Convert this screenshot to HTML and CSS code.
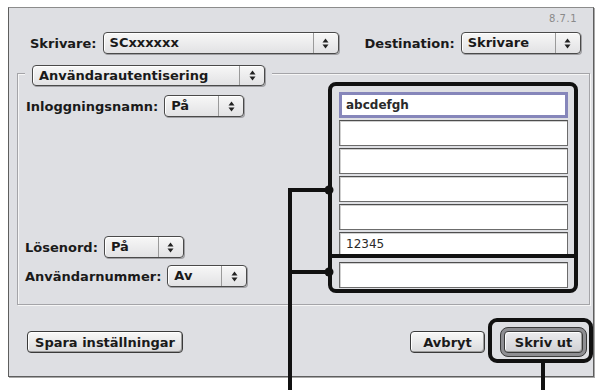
FILE: index.html
```html
<!DOCTYPE html>
<html lang="sv">
<head>
<meta charset="utf-8">
<title>Skriv ut</title>
<link rel="stylesheet" href="styles.css">
</head>
<body>
<div class="window">
  <div class="version">8.7.1</div>
  <div class="top-row">
    <span class="label">Skrivare:</span>
    <div class="popup w-printer"><span class="val">SCxxxxxx</span><span class="arrows"><svg width="7" height="11" viewBox="0 0 7 11"><path d="M0.5 4.5 L3.5 0.5 L6.5 4.5Z M0.5 6.5 L3.5 10.5 L6.5 6.5Z"/></svg></span></div>
    <span class="label dest">Destination:</span>
    <div class="popup w-dest"><span class="val">Skrivare</span><span class="arrows"><svg width="7" height="11" viewBox="0 0 7 11"><path d="M0.5 4.5 L3.5 0.5 L6.5 4.5Z M0.5 6.5 L3.5 10.5 L6.5 6.5Z"/></svg></span></div>
  </div>
  <div class="group">
    <div class="left-col">
      <div class="legend">
        <div class="popup w-legend"><span class="val">Användarautentisering</span><span class="arrows"><svg width="7" height="11" viewBox="0 0 7 11"><path d="M0.5 4.5 L3.5 0.5 L6.5 4.5Z M0.5 6.5 L3.5 10.5 L6.5 6.5Z"/></svg></span></div>
      </div>
      <div class="row login">
        <span class="label">Inloggningsnamn:</span>
        <div class="popup w-small"><span class="val">På</span><span class="arrows"><svg width="7" height="11" viewBox="0 0 7 11"><path d="M0.5 4.5 L3.5 0.5 L6.5 4.5Z M0.5 6.5 L3.5 10.5 L6.5 6.5Z"/></svg></span></div>
      </div>
      <div class="spacer"></div>
      <div class="row">
        <span class="label">Lösenord:</span>
        <div class="popup w-small"><span class="val">På</span><span class="arrows"><svg width="7" height="11" viewBox="0 0 7 11"><path d="M0.5 4.5 L3.5 0.5 L6.5 4.5Z M0.5 6.5 L3.5 10.5 L6.5 6.5Z"/></svg></span></div>
      </div>
      <div class="row last-row">
        <span class="label">Användarnummer:</span>
        <div class="popup w-small"><span class="val">Av</span><span class="arrows"><svg width="7" height="11" viewBox="0 0 7 11"><path d="M0.5 4.5 L3.5 0.5 L6.5 4.5Z M0.5 6.5 L3.5 10.5 L6.5 6.5Z"/></svg></span></div>
      </div>
    </div>
    <div class="callout">
      <div class="fields-clip">
        <div class="field focus">abcdefgh</div>
        <div class="field"></div>
        <div class="field"></div>
        <div class="field"></div>
        <div class="field"></div>
        <div class="field plain">12345</div>
      </div>
      <div class="divider"></div>
      <div class="field"></div>
    </div>
  </div>
  <div class="buttons">
    <button class="btn save">Spara inställningar</button>
    <div class="spacer"></div>
    <button class="btn cancel">Avbryt</button>
    <div class="default-ring"><button class="btn ok">Skriv ut</button></div>
  </div>
</div>
<svg class="annot" width="601" height="390" viewBox="0 0 601 390">
  <path d="M329 190 H290 V390 M290 272 H329" fill="none" stroke="#111" stroke-width="4"/>
  <circle cx="329" cy="190" r="4.5" fill="#111"/>
  <circle cx="329" cy="272" r="4.5" fill="#111"/>
  <rect x="490" y="320" width="101" height="41" rx="7" fill="none" stroke="#111" stroke-width="4"/>
  <path d="M543 361 V390" fill="none" stroke="#111" stroke-width="4"/>
</svg>
</body>
</html>
```

FILE: styles.css
```css
html, body {
  margin: 0;
  background: #fff;
}
body {
  padding: 7px 0 0 8px;
  width: 601px;
  height: 390px;
  box-sizing: border-box;
  overflow: hidden;
  font-family: "DejaVu Sans", "Liberation Sans", sans-serif;
  color: #1a1a1a;
}
.window {
  width: 586px;
  height: 370px;
  box-sizing: border-box;
  border: 1px solid #5e5e5e;
  border-top-color: #8c8c8c;
  background: #dedfe3;
  box-shadow: 1px 1px 0 #a8a8a8;
  display: flex;
  flex-direction: column;
}
.version {
  margin-top: 5px;
  height: 12px;
  line-height: 12px;
  font-size: 10px;
  color: #8a8a8a;
  text-align: right;
  padding-right: 16px;
  letter-spacing: 0.5px;
}
.label {
  font-weight: bold;
  font-size: 13px;
  white-space: nowrap;
}
.top-row {
  display: flex;
  align-items: center;
  gap: 6px;
  margin-top: 7px;
  padding-left: 21px;
}
.top-row .dest {
  margin-left: 20px;
}
.popup {
  display: flex;
  height: 22px;
  box-sizing: border-box;
  border: 1px solid #4a4a4a;
  border-radius: 4px;
  background: linear-gradient(#f7f7f7, #e2e2e4);
  box-shadow: 1px 1px 0 #a0a0a4, inset 1px 1px 0 #fff;
}
.popup .val {
  flex: 1;
  padding-left: 6px;
  font-weight: bold;
  font-size: 13px;
  line-height: 20px;
  white-space: nowrap;
  overflow: hidden;
}
.popup .arrows {
  width: 24px;
  border-left: 1px solid #9a9a9a;
  display: flex;
  align-items: center;
  justify-content: center;
}
.popup .arrows svg {
  fill: #222;
}
.w-printer { width: 236px; }
.w-dest { width: 120px; }
.w-legend { width: 233px; height: 21px; }
.w-legend .val { line-height: 19px; }
.w-small { width: 80px; }
.group {
  margin: 19px 3px 0 8px;
  border: 1px solid #a4a4a8;
  box-shadow: inset 1px 1px 0 #f6f6f6, 1px 1px 0 #f6f6f6;
  display: flex;
}
.left-col {
  flex: 1;
  display: flex;
  flex-direction: column;
  padding-left: 7px;
}
.legend {
  align-self: flex-start;
  margin: -9px 0 0 0;
  padding: 0 7px;
  background: #dedfe3;
}
.row {
  display: flex;
  align-items: center;
  gap: 6px;
}
.row.login {
  margin-top: 9px;
  padding-left: 1px;
}
.row.last-row {
  margin-top: 7px;
  margin-bottom: 17px;
}
.spacer {
  flex: 1;
}
.callout {
  width: 250px;
  box-sizing: border-box;
  margin: 8px 11px 11px 0;
  border: 4px solid #111;
  border-radius: 8px;
  padding: 6px 6px 1px 7px;
  display: flex;
  flex-direction: column;
}
.fields-clip {
  height: 162px;
  overflow: hidden;
  display: flex;
  flex-direction: column;
  gap: 2px;
}
.field {
  flex: none;
  height: 26px;
  box-sizing: border-box;
  background: #fff;
  border: 1px solid #6c6c6c;
  border-top-color: #4e4e4e;
  box-shadow: inset 1px 1px 0 #cfcfcf;
  padding-left: 6px;
  font-weight: bold;
  font-size: 12px;
  line-height: 24px;
  color: #2a2a2a;
}
.field.focus {
  border: 3px solid #8686ba;
  line-height: 20px;
  padding-left: 4px;
  box-shadow: none;
}
.field.plain {
  font-weight: normal;
  padding-top: 3px;
  line-height: 17px;
}
.divider {
  height: 4px;
  margin: 0 -6px 4px -7px;
  background: #111;
}
.buttons {
  display: flex;
  align-items: center;
  margin-top: 22px;
  padding: 0 6px 0 18px;
}
.btn {
  height: 22px;
  box-sizing: border-box;
  border: 1px solid #3a3a3a;
  border-radius: 4px;
  background: linear-gradient(#f8f8f8, #dadadc);
  box-shadow: inset -1px -1px 0 #9c9c9c, inset 1px 1px 0 #fff;
  font-family: "DejaVu Sans", "Liberation Sans", sans-serif;
  font-weight: bold;
  font-size: 13px;
  color: #1a1a1a;
  padding: 0;
  white-space: nowrap;
}
.btn.save { width: 156px; }
.btn.cancel { width: 75px; margin-right: 15px; }
.default-ring {
  display: flex;
  padding: 3px;
  border: 1px solid #3a3a3a;
  border-radius: 8px;
  background: #8e8e92;
}
.btn.ok {
  width: 79px;
  background: linear-gradient(#ececee, #d0d0d4);
}
.annot {
  position: absolute;
  top: 0;
  left: 0;
  pointer-events: none;
}
```
